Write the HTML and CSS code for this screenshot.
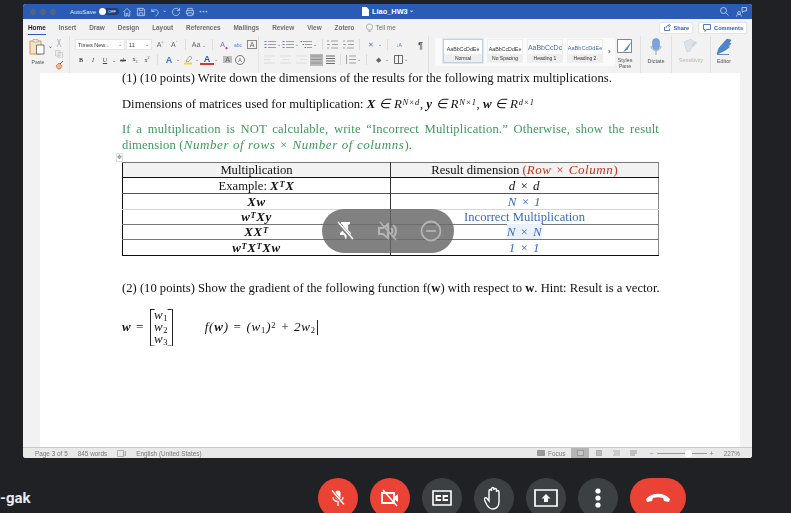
FILE: index.html
```html
<!DOCTYPE html>
<html lang="en">
<head>
	<meta charset="UTF-8">
	<title>Liao_HW3</title>
	<link rel="stylesheet" href="styles.css">
</head>
<body>
	<div class="window">
		<header class="titlebar">
			<div class="lights"><i></i><i></i><i></i></div>
			<span class="autosave">AutoSave</span>
			<span class="toggle"><b></b>OFF</span>
			<svg class="qa" width="10" height="10" viewBox="0 0 11 11"><path d="M1.5 5.5 5.5 1.5l4 4M3 5v5h2V7h1.500v3h2V5"/></svg>
			<svg class="qa" width="10" height="10" viewBox="0 0 11 11"><path d="M1.500 1.500h6.500l1.500 1.500v6.500h-8zM3.500 1.500v2.500h4v-2.500M3.500 9.500v-3h4v3"/></svg>
			<svg class="qa" width="10" height="10" viewBox="0 0 11 11"><path d="M2 2v3h3M2 5c2-3 7-2.500 7 1 0 2-1.500 3-3 4"/></svg>
			<span class="caret">&#8964;</span>
			<svg class="qa" width="10" height="10" viewBox="0 0 11 11"><path d="M9 3.500A4 4 0 1 0 9.500 6M9.500 1v3h-3"/></svg>
			<svg class="qa" width="10" height="10" viewBox="0 0 11 11"><path d="M3 4V1.500h5V4M1.500 8V4h8v4H8M3 6.500h5v3H3z"/></svg>
			<span class="more">&middot;&middot;&middot;</span>
			<div class="doctitle">
				<svg width="7" height="9" viewBox="0 0 7 9"><path d="M0 0h4.500L7 2.500V9H0z" fill="#fff"/></svg>
				<span>Liao_HW3</span>
				<span class="caret">&#8964;</span>
			</div>
			<div class="titleright">
				<svg class="qa" width="10" height="10" viewBox="0 0 10 10"><circle cx="4.500" cy="4.500" r="3"/><path d="m7 7 2.500 2.500"/></svg>
				<svg class="qa" width="11" height="11" viewBox="0 0 11 11"><circle cx="3" cy="7" r="1.500"/><path d="M.5 10.500c0-3 5-3 5 0M6 1.500h4.500v3.500H8L6.500 6.500V5H6z"/></svg>
			</div>
		</header>

		<nav class="tabs">
			<a class="tab active">Home</a>
			<a class="tab">Insert</a>
			<a class="tab">Draw</a>
			<a class="tab">Design</a>
			<a class="tab">Layout</a>
			<a class="tab">References</a>
			<a class="tab">Mailings</a>
			<a class="tab">Review</a>
			<a class="tab">View</a>
			<a class="tab">Zotero</a>
			<a class="tab tell">
				<svg width="7" height="10" viewBox="0 0 7 10"><path d="M2 7C.5 5 .2 4 .5 3 1 .5 6 .5 6.500 3c.3 1 0 2-1.500 4zM2.500 8.500h2" fill="none" stroke="#777" stroke-width=".7"/></svg>
				Tell me
			</a>
			<div class="tabright">
				<button class="pillbtn">
					<svg width="7" height="7" viewBox="0 0 7 7"><path d="M.5 3v3.500h5V4.500M2 4c0-2 1.500-2.500 3-2.500M4.500 0 6.500 1.500 4.500 3" fill="none" stroke="#2b5cb5" stroke-width=".8"/></svg>
					Share
				</button>
				<button class="pillbtn">
					<svg width="8" height="8" viewBox="0 0 8 8"><path d="M.5.500h7v5H3.500L2 7.500v-2H.5z" fill="none" stroke="#2b5cb5" stroke-width=".8"/></svg>
					Comments
				</button>
			</div>
		</nav>

		<section class="ribbon">
			<div class="group clipboard">
				<div class="paste">
					<svg width="18" height="18" viewBox="0 0 18 18"><path d="M1 3h11v13H1z" fill="#f6e3c4" stroke="#d99a45"/><path d="M4 1.500h5V4H4z" fill="#eee" stroke="#999" stroke-width=".6"/><path d="M7.500 7h7.500v9H7.500z" fill="#fff" stroke="#555" stroke-width=".8"/></svg>
					<span>Paste</span>
				</div>
				<span class="caret dark">&#8964;</span>
				<div class="cliptools">
					<svg width="8" height="8" viewBox="0 0 8 8"><path d="M2 8 5.500 0M6 8 2.500 0" stroke="#b5bac2" fill="none"/></svg>
					<svg width="8" height="8" viewBox="0 0 8 8"><path d="M.5.500h4.500v5.500H.5zM3 2.500h4.500V8H3z" fill="#eee" stroke="#bbb" stroke-width=".6"/></svg>
					<svg width="9" height="9" viewBox="0 0 9 9"><path d="M1 5l3-3 3 3-2 3H3z" fill="#f1b98e" stroke="#c9632b" stroke-width=".7"/><path d="M5 3l3-3" stroke="#555"/></svg>
				</div>
			</div>

			<div class="group fontgroup">
				<div class="row">
					<span class="select fontname">Times New...<em>&#8964;</em></span>
					<span class="select fontsize">11<em>&#8964;</em></span>
					<span class="tool big">A<sup>^</sup></span>
					<span class="tool">A<sup>&#711;</sup></span>
					<span class="sep"></span>
					<span class="tool wide">Aa <em>&#8964;</em></span>
					<span class="sep"></span>
					<span class="tool purple">A<sub>&#9670;</sub></span>
					<span class="tool blue small">abc</span>
					<span class="tool boxed">A</span>
				</div>
				<div class="row">
					<span class="tool fmt"><b>B</b></span>
					<span class="tool fmt"><i>I</i></span>
					<span class="tool fmt"><u>U</u></span>
					<span class="tool fmt caretonly">&#8964;</span>
					<span class="tool fmt"><s>ab</s></span>
					<span class="tool fmt">x<sub>2</sub></span>
					<span class="tool fmt">x<sup>2</sup></span>
					<span class="sep"></span>
					<span class="tool colored blueA">A</span><em class="mini">&#8964;</em>
					<span class="tool colored marker">
						<svg width="10" height="10" viewBox="0 0 10 10"><path d="M3 6 7 1l2 2-4 4z" fill="#fff" stroke="#666" stroke-width=".6"/><path d="M1 8.500h8" stroke="#f1d63a" stroke-width="2"/></svg>
					</span><em class="mini">&#8964;</em>
					<span class="tool colored redbar">A</span><em class="mini">&#8964;</em>
					<span class="tool shaded">A</span>
					<span class="tool circled">A</span>
				</div>
			</div>

			<div class="group paragroup">
				<div class="row">
					<svg class="listicon" width="12" height="9" viewBox="0 0 12 9"><path d="M4 1.500h8M4 4.500h8M4 7.500h8"/><path class="dots" d="M.5 1.500h2M.5 4.500h2M.5 7.500h2"/></svg><em class="mini">&#8964;</em>
					<svg class="listicon" width="12" height="9" viewBox="0 0 12 9"><path d="M4 1.500h8M4 4.500h8M4 7.500h8"/><path class="dots" d="M.5 1.500h2M.5 4.500h2M.5 7.500h2"/></svg><em class="mini">&#8964;</em>
					<svg class="listicon" width="12" height="9" viewBox="0 0 12 9"><path d="M3 1.500h9M5 4.500h7M7 7.500h5"/><path class="dots" d="M.5 1.500h1.500M2.500 4.500h1.500M4.500 7.500h1.500"/></svg><em class="mini">&#8964;</em>
					<span class="sep"></span>
					<svg class="listicon" width="11" height="9" viewBox="0 0 11 9"><path d="M4 1h7M5 4.500h6M4 8h7M0 1h2M0 4.500h3M0 8h2"/></svg>
					<svg class="listicon gapl" width="11" height="9" viewBox="0 0 11 9"><path d="M4 1h7M5 4.500h6M4 8h7M0 1h2M0 4.500h3M0 8h2"/></svg>
					<span class="sep"></span>
					<span class="tool blue">&#10005;</span><em class="mini">&#8964;</em>
					<span class="sep"></span>
					<span class="tool blue small">&#8595;A</span>
					<span class="pilcrow">&para;</span>
				</div>
				<div class="row">
					<svg class="listicon light" width="11" height="9" viewBox="0 0 11 9"><path d="M0 1h11M0 4.500h7M0 8h11"/></svg>
					<svg class="listicon light gapl" width="11" height="9" viewBox="0 0 11 9"><path d="M0 1h11M2 4.500h7M0 8h11"/></svg>
					<svg class="listicon light gapl" width="11" height="9" viewBox="0 0 11 9"><path d="M0 1h11M4 4.500h7M0 8h11"/></svg>
					<span class="alignon"><svg class="listicon" width="11" height="9" viewBox="0 0 11 9"><path d="M0 1h11M0 4.500h11M0 8h11"/></svg></span>
					<svg class="listicon darkicon" width="9" height="9" viewBox="0 0 9 9"><path d="M0 1h9M0 3.500h9M0 6h9M0 8.500h9"/></svg>
					<span class="sep"></span>
					<svg class="listicon" width="11" height="9" viewBox="0 0 11 9"><path d="M4 1h7M4 4.500h7M4 8h7M1.500 0v9"/></svg><em class="mini">&#8964;</em>
					<span class="sep"></span>
					<span class="tool">&#9670;</span><em class="mini">&#8964;</em>
					<svg class="listicon darkicon gapl" width="9" height="9" viewBox="0 0 9 9"><path d="M.5.500h8v8h-8zM4.500.500v8"/></svg><em class="mini">&#8964;</em>
				</div>
			</div>

			<div class="group styles">
				<div class="style selected"><span class="sample">AaBbCcDdEe</span><span class="name">Normal</span></div>
				<div class="style"><span class="sample">AaBbCcDdEe</span><span class="name">No Spacing</span></div>
				<div class="style"><span class="sample head1">AaBbCcDc</span><span class="name">Heading 1</span></div>
				<div class="style"><span class="sample head2">AaBbCcDdEe</span><span class="name">Heading 2</span></div>
				<span class="chev">&rsaquo;</span>
			</div>

			<div class="bigtool stylespane">
				<svg width="16" height="16" viewBox="0 0 16 16"><path d="M.5 1.500h14v13H.5z" fill="#fff" stroke="#555" stroke-width=".7"/><path d="m15 3-6 7-3 4.500 4.500-3z" fill="#4f86c9"/></svg>
				<span>Styles<br>Pane</span>
			</div>
			<div class="bigtool dictate">
				<svg width="12" height="17" viewBox="0 0 12 17"><rect x="2.500" y=".5" width="7" height="11" rx="3.500" fill="#7aa6dd" stroke="#5a86bd" stroke-width=".5"/><path d="M1 8c0 6 10 6 10 0M6 13v4" fill="none" stroke="#888" stroke-width=".7"/></svg>
				<span>Dictate</span>
			</div>
			<div class="bigtool sensitivity">
				<svg width="17" height="16" viewBox="0 0 17 16"><path d="M1 4 8 1l3 3-4 9-3 1z" fill="#dde3ea" stroke="#c4ccd6" stroke-width=".6"/><path d="m8 7 4-4 2 2-4 4z" fill="#cdd5df"/></svg>
				<span>Sensitivity</span>
			</div>
			<div class="bigtool editor">
				<svg width="17" height="17" viewBox="0 0 17 17"><path d="M1 16 3 10 11 1l4 1-2 3 2 .5-3 3 1.500.5-4 3-6 3z" fill="#4f86c9" stroke="#2b5cb5" stroke-width=".5"/><path d="M1 16.500h12" stroke="#2b5cb5" stroke-width=".7"/></svg>
				<span>Editor</span>
			</div>
		</section>

		<main class="docarea">
			<div class="page">
				<p class="line q1">(1) (10 points) Write down the dimensions of the results for the following matrix multiplications.</p>
				<p class="line dims">Dimensions of matrices used for multiplication: <span class="m b">X</span> <span class="m">&isin;</span> <span class="m">R<sup>N&times;d</sup></span>, <span class="m b">y</span> <span class="m">&isin;</span> <span class="m">R<sup>N&times;1</sup></span>, <span class="m b">w</span> <span class="m">&isin;</span> <span class="m">R<sup>d&times;1</sup></span></p>
				<p class="line note">If a multiplication is NOT calculable, write &ldquo;Incorrect Multiplication.&rdquo; Otherwise, show the result dimension (<span class="m">Number of rows &times; Number of columns</span>).</p>
				<div class="tablehandle">&#10021;</div>
				<table class="matrix">
					<tr class="headrow"><th>Multiplication</th><th>Result dimension <span class="red">(<span class="m">Row &times; Column</span>)</span></th></tr>
					<tr class="exrow"><td>Example: <span class="m b">X<sup>T</sup>X</span></td><td><span class="m">d &times; d</span></td></tr>
					<tr class="xwrow"><td><span class="m b">Xw</span></td><td class="ans"><span class="m">N &times; 1</span></td></tr>
					<tr class="lightrow"><td><span class="m b">w<sup>T</sup>Xy</span></td><td class="ans">Incorrect Multiplication</td></tr>
					<tr><td><span class="m b">XX<sup>T</sup></span></td><td class="ans"><span class="m sel">N &times; N</span></td></tr>
					<tr class="lastrow"><td><span class="m b">w<sup>T</sup>X<sup>T</sup>Xw</span></td><td class="ans"><span class="m">1 &times; 1</span></td></tr>
				</table>
				<p class="line q2">(2) (10 points) Show the gradient of the following function f(<b>w</b>) with respect to <b>w</b>. Hint: Result is a vector.</p>
				<div class="equations">
					<span class="m b">w</span><span class="m eq">=</span>
					<div class="bracket"><span class="m">w<sub>1</sub></span><span class="m">w<sub>2</sub></span><span class="m">w<sub>3</sub></span></div>
					<span class="m func">f(<b>w</b>) = (w<sub>1</sub>)<sup>2</sup> + 2w<sub>2</sub></span><span class="cursor"></span>
				</div>

				<div class="hud">
					<svg width="22" height="22" viewBox="0 0 22 22"><path d="M7 2h9v2l-2 1v5l3 3v2h-4l-1 5-2-5H6v-2l3-3V5L7 4z" fill="#fff"/><path d="m4 3 15 17" stroke="#7f7f7f" stroke-width="3.500"/><path d="m4 2 15 17" stroke="#fff" stroke-width="1.400"/></svg>
					<svg width="22" height="22" viewBox="0 0 22 22"><path d="M2 8v6h4l5 4V4L6 8zM14 8c2 2 2 4 0 6M16 5c4 3 4 9 0 12" fill="none" stroke="#b4b4b4" stroke-width="2"/><path d="m3 2 16 18" stroke="#b4b4b4" stroke-width="1.500"/></svg>
					<svg width="22" height="22" viewBox="0 0 22 22"><circle cx="11" cy="11" r="9.500" fill="none" stroke="#b4b4b4" stroke-width="1.800"/><path d="M6 11h10" stroke="#b4b4b4" stroke-width="1.800"/></svg>
				</div>
			</div>
			<div class="gutter"></div>
		</main>

		<footer class="status">
			<span>Page 3 of 5</span>
			<span>845 words</span>
			<svg width="9" height="7" viewBox="0 0 9 7"><path d="M.5.500h6v6h-6zM6.500 3l2-2v5l-2-2" fill="none" stroke="#8a8a8a" stroke-width=".6"/></svg>
			<span>English (United States)</span>
			<div class="statusright">
				<svg width="8" height="6" viewBox="0 0 8 6"><path d="M.5.500h7v5h-7z" fill="#999" stroke="#777" stroke-width=".6"/></svg>
				<span class="focus">Focus</span>
				<span class="viewon"><i></i></span>
				<svg width="7" height="7" viewBox="0 0 7 7"><path d="M.5.500h5v5h-5z" fill="#bbb" stroke="#888" stroke-width=".5"/></svg>
				<svg class="gapview" width="7" height="6" viewBox="0 0 7 6"><path d="M0 1h7M1 3h6M0 5h7" stroke="#999" stroke-width=".7"/></svg>
				<svg class="gapview" width="7" height="6" viewBox="0 0 7 6"><path d="M0 1h7M0 3h7M0 5h5" stroke="#777" stroke-width=".7"/></svg>
				<div class="zoom"><span>&minus;</span><div class="slider"><b></b></div><span>+</span></div>
				<span class="pct">227%</span>
			</div>
		</footer>
	</div>

	<div class="meetbar">
		<div class="caller">-gak</div>
		<div class="controls">
			<button class="ctl red">
				<svg width="18" height="18" viewBox="0 0 18 18"><rect x="6.500" y="1.500" width="5" height="9" rx="2.500" fill="#fff"/><path d="M4 8c0 6 10 6 10 0M9 13v4" fill="none" stroke="#fff" stroke-width="1.400"/><path d="m3 2 12 14" stroke="#ea4335" stroke-width="3"/><path d="m3 1.500 12 14" stroke="#fff" stroke-width="1.300"/></svg>
			</button>
			<button class="ctl red">
				<svg width="20" height="18" viewBox="0 0 20 18"><path d="M2 4h12v10H2z" fill="none" stroke="#fff" stroke-width="1.800"/><path d="m14 8 4-3v8l-4-3z" fill="#fff"/><path d="M3 1 17 17" stroke="#fff" stroke-width="1.500"/></svg>
			</button>
			<button class="ctl">
				<svg width="20" height="16" viewBox="0 0 20 16"><path d="M1 1h18v14H1z" fill="none" stroke="#fff" stroke-width="1.600"/><path d="M9 6H4.500v4H9M16 6h-4.500v4H16" fill="none" stroke="#fff" stroke-width="1.800"/></svg>
			</button>
			<button class="ctl">
				<svg width="20" height="24" viewBox="0 0 20 24"><path d="M5 13V5c0-2 2.500-2 2.500 0V3c0-2 2.500-2 2.500 0v1c0-2 2.500-2 2.500 0v2c0-2 2.500-2 2.500 0v10c0 4-2.500 7-6 7-3 0-4.500-1.500-6-4l-2.500-5c-.8-2 1.500-3 2.500-1.500L5 15z" fill="none" stroke="#fff" stroke-width="1.400"/></svg>
			</button>
			<button class="ctl">
				<svg width="24" height="18" viewBox="0 0 24 18"><path d="M1 1h22v16H1z" fill="none" stroke="#fff" stroke-width="1.700"/><path d="m12 5 4.500 4.500H14V13h-4V9.500H7.500z" fill="#fff"/></svg>
			</button>
			<button class="ctl">
				<svg width="6" height="20" viewBox="0 0 6 20"><circle cx="3" cy="3" r="2.600" fill="#fff"/><circle cx="3" cy="10" r="2.600" fill="#fff"/><circle cx="3" cy="17" r="2.600" fill="#fff"/></svg>
			</button>
			<button class="ctl red hangup">
				<svg width="26" height="10" viewBox="0 0 26 10"><path d="M1 6c6-7 18-7 24 0l-1 3-5-1-1-3c-3-1-7-1-10 0L7 8 2 9z" fill="#fff"/></svg>
			</button>
		</div>
	</div>
</body>
</html>
```

FILE: styles.css
```css
html, body {
	margin: 0;
	height: 513px;
	overflow: hidden;
	background: #202124;
}

body {
	font-family: "Liberation Sans", Arial, sans-serif;
	color: #444;
}

svg {
	display: block;
	flex: none;
}

.window {
	width: 729px;
	height: 454px;
	margin: 4px 0 0 23px;
	border-radius: 3px;
	overflow: hidden;
	background: #f2f2f2;
	display: flex;
	flex-direction: column;
	filter: blur(.35px);
}

/* title bar */
.titlebar {
	height: 15px;
	flex: none;
	background: #2b5cb5;
	color: #fff;
	display: flex;
	align-items: center;
	padding-left: 7px;
	font-size: 6px;
	position: relative;
}

.lights {
	display: flex;
	gap: 4px;
	margin-right: 14px;
}

.lights i {
	width: 6px;
	height: 6px;
	border-radius: 50%;
	background: #55637f;
}

.autosave {
	opacity: .85;
	margin-right: 3px;
}

.toggle {
	width: 20px;
	height: 7px;
	border-radius: 4px;
	background: #1d3f80;
	font-size: 4px;
	display: flex;
	align-items: center;
	gap: 2px;
	margin-right: 3px;
}

.toggle b {
	width: 7px;
	height: 7px;
	background: #fff;
	border-radius: 50%;
}

.qa {
	fill: none;
	stroke: #cfdcf3;
	stroke-width: .8;
	margin-right: 4px;
}

.caret {
	font-size: 6px;
	line-height: 6px;
	margin: -3px 4px 0 -2px;
	color: #cfdcf3;
}

.more {
	font-size: 9px;
	font-weight: bold;
	color: #cfdcf3;
}

.doctitle {
	position: absolute;
	left: 339px;
	top: 0;
	height: 15px;
	display: flex;
	align-items: center;
	gap: 3px;
	font-size: 7.400px;
	font-weight: bold;
}

.titleright {
	margin-left: auto;
	display: flex;
	gap: 2px;
}

.titleright .qa {
	margin-right: 5px;
}

/* tabs */
.tabs {
	height: 17px;
	flex: none;
	display: flex;
	align-items: center;
	gap: 13px;
	padding-left: 5px;
	font-size: 6.400px;
	color: #4c4c4c;
}

.tab {
	display: flex;
	align-items: center;
	gap: 3px;
	height: 13px;
	font-weight: bold;
	opacity: .8;
}

.tab.active {
	color: #222;
	opacity: 1;
	border-bottom: 1px solid #2b5cb5;
}

.tell {
	margin-left: -2px;
	font-weight: normal;
}

.tabright {
	margin-left: auto;
	display: flex;
	gap: 5px;
	padding-right: 5px;
}

.pillbtn {
	height: 12px;
	padding: 0 3px 0 4px;
	background: #fff;
	border: 1px solid #e3e3e3;
	border-radius: 2px;
	color: #2b5cb5;
	font: bold 5.600px "Liberation Sans", Arial, sans-serif;
	display: flex;
	align-items: center;
	gap: 3px;
}

/* ribbon */
.ribbon {
	height: 37px;
	flex: none;
	display: flex;
	font-size: 6px;
}

.group {
	flex: none;
}

.row {
	display: flex;
	align-items: center;
	height: 15px;
}

.clipboard {
	width: 46px;
	padding-left: 6px;
	display: flex;
	align-items: flex-start;
	padding-top: 2px;
	box-sizing: border-box;
}

.paste {
	width: 18px;
	font-size: 5px;
	text-align: center;
	color: #555;
}

.paste span {
	display: block;
	margin-top: 3px;
}

.caret.dark {
	margin: 5px 2px 0 1px;
	color: #555;
}

.cliptools {
	display: flex;
	flex-direction: column;
	gap: 3px;
	padding-top: 1px;
}

.fontgroup {
	width: 189px;
	padding-top: 1px;
	border-left: 1px solid #e2e2e2;
	padding-left: 5px;
	box-sizing: border-box;
}

.select {
	height: 11px;
	background: #fff;
	border: 1px solid #e6e6e6;
	display: flex;
	align-items: center;
	justify-content: space-between;
	box-sizing: border-box;
	padding: 0 2px;
	font-size: 5.500px;
	color: #333;
	margin-right: 1px;
}

.select em, .mini {
	font-style: normal;
	font-size: 5px;
	line-height: 4px;
	margin-top: -2px;
	color: #666;
}

.fontname {
	width: 50px;
}

.fontsize {
	width: 26px;
}

.tool {
	width: 14px;
	flex: none;
	text-align: center;
	font-size: 7px;
	color: #666;
}

.tool sup, .tool sub {
	font-size: 4px;
	line-height: 0;
}

.tool.wide {
	width: 18px;
}

.tool.wide em {
	font-style: normal;
	font-size: 5px;
}

.purple {
	color: #9a5bb8;
}

.blue {
	color: #4f86c9;
}

.small {
	font-size: 5px;
}

.boxed {
	width: 8px;
	border: 1px solid #888;
	line-height: 7px;
	margin-left: 2px;
}

.sep {
	width: 1px;
	height: 11px;
	background: #ddd;
	margin: 0 4px;
	flex: none;
}

.fmt {
	width: 12px;
	font-size: 6px;
	color: #444;
	font-family: "Liberation Serif", serif;
}

.fmt.caretonly {
	width: 6px;
	font-size: 5px;
}

.colored {
	font-size: 9px;
	font-weight: bold;
	display: flex;
	justify-content: center;
}

.blueA {
	color: #3f75c4;
}

.redbar {
	color: #2b5cb5;
	box-shadow: inset 0 -2px 0 #d23c2e;
	height: 11px;
	line-height: 11px;
}

.mini {
	width: 5px;
	flex: none;
}

.shaded {
	width: 9px;
	background: #bcbcbc;
	margin-left: 4px;
}

.circled {
	width: 8px;
	height: 8px;
	line-height: 8px;
	border: 1px solid #777;
	border-radius: 50%;
	margin-left: 3px;
	font-size: 5px;
}

.paragroup {
	width: 171px;
	padding-top: 1px;
	padding-left: 5px;
	box-sizing: border-box;
	border-left: 1px solid #e2e2e2;
	border-right: 1px solid #e2e2e2;
	margin-right: 6px;
}

.listicon {
	fill: none;
	stroke: #8a8a8a;
	stroke-width: .8;
	margin-right: 1px;
}

.listicon .dots {
	stroke: #4f86c9;
	stroke-width: 1.200;
}

.listicon.light {
	stroke: #d8d8d8;
}

.listicon.darkicon {
	stroke: #444;
}

.gapl {
	margin-left: 4px;
}

.alignon {
	width: 13px;
	height: 12px;
	margin-left: 2px;
	margin-right: 3px;
	background: #b8b8b8;
	display: flex;
	align-items: center;
	justify-content: center;
}

.pilcrow {
	font-size: 9px;
	font-weight: bold;
	color: #555;
	margin-left: 12px;
}

.styles {
	width: 180px;
	height: 28px;
	margin-top: 2px;
	background: #fafafa;
	display: flex;
	gap: 4px;
	padding: 1px 0 0 8px;
	box-sizing: border-box;
}

.style {
	width: 36px;
	height: 24px;
	background: #fff;
	border: 1px solid #eee;
	box-sizing: border-box;
	display: flex;
	flex-direction: column;
	align-items: center;
	justify-content: space-between;
	color: #333;
	overflow: hidden;
}

.style.selected {
	width: 40px;
	border-color: #bcd0e8;
	box-shadow: 0 0 0 1px #dfe8f3;
}

.sample {
	font-size: 5.300px;
	margin-top: 6px;
	white-space: nowrap;
}

.sample.head1 {
	font-size: 7px;
	margin-top: 4px;
	color: #3f6fb0;
}

.sample.head2 {
	font-size: 5.600px;
	margin-top: 5px;
	color: #3f6fb0;
}

.name {
	font-size: 5px;
	width: 100%;
	text-align: center;
	background: #eee;
	padding: 1px 0;
}

.chev {
	font-size: 8px;
	color: #333;
	margin: 8px 0 0 1px;
}

.bigtool {
	width: 38px;
	flex: none;
	box-sizing: border-box;
	padding-top: 2px;
	display: flex;
	flex-direction: column;
	align-items: center;
	gap: 3px;
	font-size: 5.400px;
	line-height: 6px;
	text-align: center;
	color: #555;
}

.stylespane {
	width: 22px;
	margin-left: -1px;
}

.dictate {
	width: 31px;
	border-left: 1px solid #e2e2e2;
	margin-left: 4px;
}

.sensitivity {
	width: 39px;
	color: #b5b5b5;
	border-left: 1px solid #e2e2e2;
}

.editor {
	width: 27px;
	border-left: 1px solid #e2e2e2;
}

/* document */
.docarea {
	flex: 1;
	min-height: 0;
	display: flex;
	padding-left: 17px;
	background: #f2f2f2;
}

.page {
	width: 700px;
	box-sizing: border-box;
	background: #fff;
	padding-left: 82px;
	position: relative;
	font-family: "Liberation Serif", "Times New Roman", serif;
	font-size: 12.630px;
	line-height: 16px;
	color: #111;
	box-shadow: 0 1px 0 #c8c8c8;
}

.gutter {
	flex: 1;
}

.line {
	margin: 0;
	width: 537px;
}

.m {
	font-family: "Liberation Serif", serif;
	font-size: 13px;
	font-style: italic;
	letter-spacing: .6px;
}

.m.b, .m b {
	font-weight: bold;
}

.m sup, .m sub {
	font-size: 8.500px;
	line-height: 0;
}

.m sup {
	vertical-align: 3px;
}

.m sub {
	vertical-align: -2px;
	font-style: normal;
}

.func sup {
	font-style: normal;
}

.q1 {
	margin-top: -3px;
}

.dims {
	margin-top: 10px;
}

.note {
	margin-top: 9px;
	color: #3f9a5c;
	text-align: justify;
	letter-spacing: .15px;
}

.tablehandle {
	height: 9px;
	margin-left: -6px;
	width: 7px;
	font-size: 6px;
	line-height: 7px;
	color: #777;
	border: 1px solid #ddd;
	box-sizing: border-box;
}

.matrix {
	width: 537px;
	border-collapse: collapse;
	table-layout: fixed;
	border: 1px solid #111;
	border-right-color: #888;
	line-height: 13px;
}

.matrix th, .matrix td {
	font-weight: normal;
	padding: 0;
	height: 14px;
	text-align: center;
	border-top: 1px solid #777;
}

.matrix th:first-child, .matrix td:first-child {
	width: 267px;
	border-right: 1px solid #333;
}

.headrow th {
	background: #f2f2f2;
}

.exrow td {
	height: 15px;
	border-top: 1px solid #111;
}

.xwrow td {
	height: 15px;
	border-top: 1px solid #555;
}

.lightrow td {
	border-top: 1px solid #d5d5d5;
}

.lastrow td {
	height: 15px;
}

.ans {
	color: #3b6dbd;
}

.sel {
	background: #eaf1fb;
}

.red {
	color: #c0341d;
}

.q2 {
	margin-top: 24px;
	white-space: nowrap;
}

.equations {
	display: flex;
	align-items: center;
	margin-top: 12px;
	height: 38px;
}

.eq {
	margin-left: 4px;
}

.bracket {
	margin-left: 5px;
	width: 23px;
	height: 37px;
	box-sizing: border-box;
	border-left: 1px solid #222;
	border-right: 1px solid #222;
	display: flex;
	flex-direction: column;
	align-items: center;
	line-height: 12.300px;
	position: relative;
}

.bracket::before, .bracket::after {
	content: "";
	position: absolute;
	left: 0;
	right: 0;
	height: 100%;
	border-top: 1px solid #222;
	border-bottom: 1px solid #222;
	box-sizing: border-box;
	clip-path: polygon(0 0, 4px 0, 4px 100%, 0 100%);
}

.bracket::after {
	clip-path: polygon(calc(100% - 4px) 0, 100% 0, 100% 100%, calc(100% - 4px) 100%);
}

.func {
	margin-left: 32px;
	letter-spacing: .8px;
}

.cursor {
	width: 1px;
	height: 15px;
	background: #222;
	margin-left: 1px;
}

/* call overlay */
.hud {
	position: absolute;
	left: 282px;
	top: 136px;
	width: 132px;
	height: 44px;
	border-radius: 22px;
	background: rgba(105, 105, 105, .84);
	display: flex;
	align-items: center;
	justify-content: space-between;
	padding: 0 12px;
	box-sizing: border-box;
}

/* status bar */
.status {
	height: 11px;
	flex: none;
	background: #e9e9e9;
	border-top: 1px solid #c9c9c9;
	box-sizing: border-box;
	display: flex;
	align-items: center;
	gap: 10px;
	padding-left: 12px;
	font-size: 6.400px;
	color: #777;
}

.statusright {
	margin-left: auto;
	display: flex;
	align-items: center;
	gap: 3px;
	padding-right: 12px;
}

.focus {
	margin-right: 3px;
}

.viewon {
	width: 18px;
	height: 10px;
	background: #b5b5b5;
	display: flex;
	align-items: center;
	justify-content: center;
	margin-right: 4px;
}

.viewon i {
	width: 7px;
	height: 6px;
	background: #c9c9c9;
	border: 1px solid #999;
	box-sizing: border-box;
}

.gapview {
	margin-left: 7px;
}

.zoom {
	display: flex;
	align-items: center;
	gap: 3px;
	margin-left: 9px;
	font-size: 7px;
}

.slider {
	width: 50px;
	height: 1px;
	background: #999;
	position: relative;
}

.slider b {
	position: absolute;
	left: 28px;
	top: -3px;
	width: 7px;
	height: 7px;
	background: #fff;
	border-radius: 50%;
}

.pct {
	margin-left: 7px;
}

/* meet bar */
.meetbar {
	height: 40px;
	margin-top: 20px;
	position: relative;
	display: flex;
	align-items: center;
}

.caller {
	font: bold 15px "Roboto", "Liberation Sans", sans-serif;
	color: #e8eaed;
	margin-top: 0;
}

.controls {
	display: flex;
	gap: 12px;
	margin-left: 287px;
}

.ctl {
	width: 40px;
	height: 40px;
	flex: none;
	padding: 0;
	border: 0;
	border-radius: 20px;
	background: #3c4043;
	display: flex;
	align-items: center;
	justify-content: center;
}

.ctl.red {
	background: #ea4335;
}

.ctl.hangup {
	width: 56px;
}
```
